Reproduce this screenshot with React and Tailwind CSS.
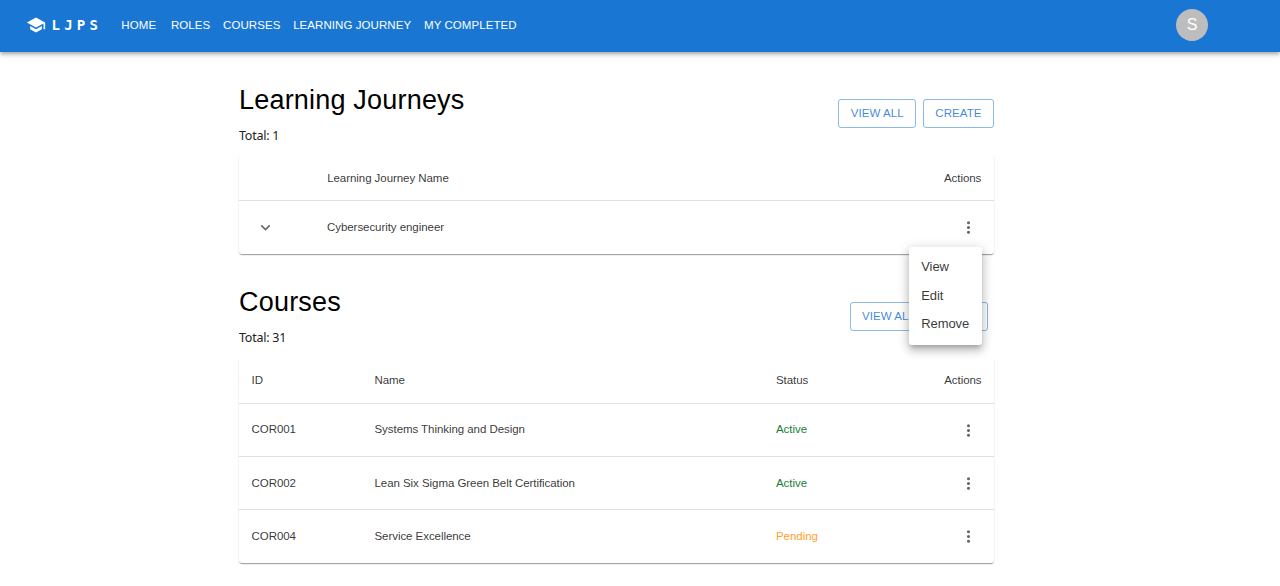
import React from "react";
import { MdSchool, MdMoreVert, MdKeyboardArrowDown } from "react-icons/md";

const NAV = ["Home", "Roles", "Courses", "Learning Journey", "My Completed"];

const COURSES = [
  { id: "COR001", name: "Systems Thinking and Design", status: "Active" },
  { id: "COR002", name: "Lean Six Sigma Green Belt Certification", status: "Active" },
  { id: "COR004", name: "Service Excellence", status: "Pending" },
];

function Header() {
  return (
    <header className="relative z-10 flex h-[52px] items-center bg-[#1976d2] pb-[3px] pl-[26px] pr-[72px] text-white shadow-[0_2px_3px_-1px_rgba(0,0,0,0.2),0_3px_4px_0_rgba(0,0,0,0.14),0_1px_8px_0_rgba(0,0,0,0.12)]">
      <MdSchool className="size-5" />
      <span className="ml-[5.5px] w-[61.5px] font-['DejaVu_Sans_Mono',monospace] text-[14px] font-bold leading-none tracking-[4.2px] whitespace-nowrap">
        LJPS
      </span>
      <nav className="flex flex-1">
        {NAV.map((item) => (
          <button
            key={item}
            className="min-w-[51.5px] px-[6.4px] text-[11.5px] leading-5 tracking-[0.006em] uppercase whitespace-nowrap"
          >
            {item}
          </button>
        ))}
      </nav>
      <div className="flex size-8 items-center justify-center rounded-full bg-[#bdbdbd] text-[16px]">S</div>
    </header>
  );
}

function OutlinedButton({ children, className = "" }) {
  return (
    <button
      className={`h-[29px] rounded-[3px] border border-[#1976d2]/50 px-[11.5px] text-[11.5px] tracking-[0.006em] text-[#1976d2]/85 uppercase ${className}`}
    >
      {children}
    </button>
  );
}

function SectionHeader({ title, total, children, className = "" }) {
  return (
    <div className={`flex items-start justify-between ${className}`}>
      <div>
        <h4 className="text-[27px] leading-[33px] tracking-[0.00735em] text-black">{title}</h4>
        <p className="mt-[10px] font-['Noto_Sans',sans-serif] text-[12.5px] leading-[18px] tracking-[-0.25px] text-[#212121]">
          Total: {total}
        </p>
      </div>
      <div className="mt-[15px] flex gap-[6.5px]">{children}</div>
    </div>
  );
}

function Card({ children }) {
  return (
    <div className="rounded-[3px] bg-white text-[11.5px] tracking-[-0.005em] text-black/80 shadow-[0_2px_1px_-1px_rgba(0,0,0,0.2),0_1px_1px_0_rgba(0,0,0,0.14),0_1px_2px_0_rgba(0,0,0,0.12)]">
      {children}
    </div>
  );
}

function ActionMenu() {
  return (
    <ul className="absolute top-[28.5px] right-0 z-20 w-[73px] rounded-[3px] bg-white pt-[6px] pb-[7px] text-[13px] tracking-[-0.005em] shadow-[0_4px_4px_-2px_rgba(0,0,0,0.2),0_6px_8px_1px_rgba(0,0,0,0.14),0_2px_11px_2px_rgba(0,0,0,0.12)]">
      {["View", "Edit", "Remove"].map((item) => (
        <li key={item} className="flex h-[28.5px] items-center px-[12.7px]">
          {item}
        </li>
      ))}
    </ul>
  );
}

function Actions({ children }) {
  return (
    <div className="relative ml-auto flex items-center pr-1">
      <MdMoreVert className="size-[19px] text-black/60" />
      {children}
    </div>
  );
}

export default function App() {
  return (
    <div className="h-[586px] overflow-hidden bg-white font-['Liberation_Sans',Arial,sans-serif]">
      <Header />
      <main className="ml-[239px] w-[755px]">
        <SectionHeader title="Learning Journeys" total={1} className="h-[103px] pt-8">
          <OutlinedButton>View All</OutlinedButton>
          <OutlinedButton>Create</OutlinedButton>
        </SectionHeader>
        <Card>
          <div className="flex h-[46px] items-center border-b border-[#e0e0e0] px-[12.7px] pt-0.5">
            <span className="ml-[75.5px]">Learning Journey Name</span>
            <span className="ml-auto">Actions</span>
          </div>
          <div className="flex h-[53px] items-center px-[12.5px]">
            <div className="w-[75.5px] pl-[4.5px]">
              <MdKeyboardArrowDown className="size-[19px] text-black/60" />
            </div>
            <span>Cybersecurity engineer</span>
            <Actions>
              <ActionMenu />
            </Actions>
          </div>
        </Card>

        <SectionHeader title="Courses" total={31} className="h-[104px] pt-8">
          <OutlinedButton className="mt-px">View All</OutlinedButton>
          <OutlinedButton className="mt-px mr-[6.5px] w-[53.5px]" />
        </SectionHeader>
        <Card>
          <div className="flex h-[45.5px] items-center border-b border-[#e0e0e0] px-[12.5px]">
            <span className="w-[123px]">ID</span>
            <span className="w-[401.5px]">Name</span>
            <span>Status</span>
            <span className="ml-auto">Actions</span>
          </div>
          {COURSES.map((course) => (
            <div
              key={course.id}
              className="flex h-[53.2px] items-center border-b border-[#e0e0e0] px-[12.5px] pt-px last:border-b-0 last:pt-0"
            >
              <span className="w-[123px]">{course.id}</span>
              <span className="w-[401.5px]">{course.name}</span>
              <span className={course.status === "Active" ? "text-[#188038]" : "text-[#ffa12e]"}>
                {course.status}
              </span>
              <Actions />
            </div>
          ))}
        </Card>
      </main>
    </div>
  );
}
